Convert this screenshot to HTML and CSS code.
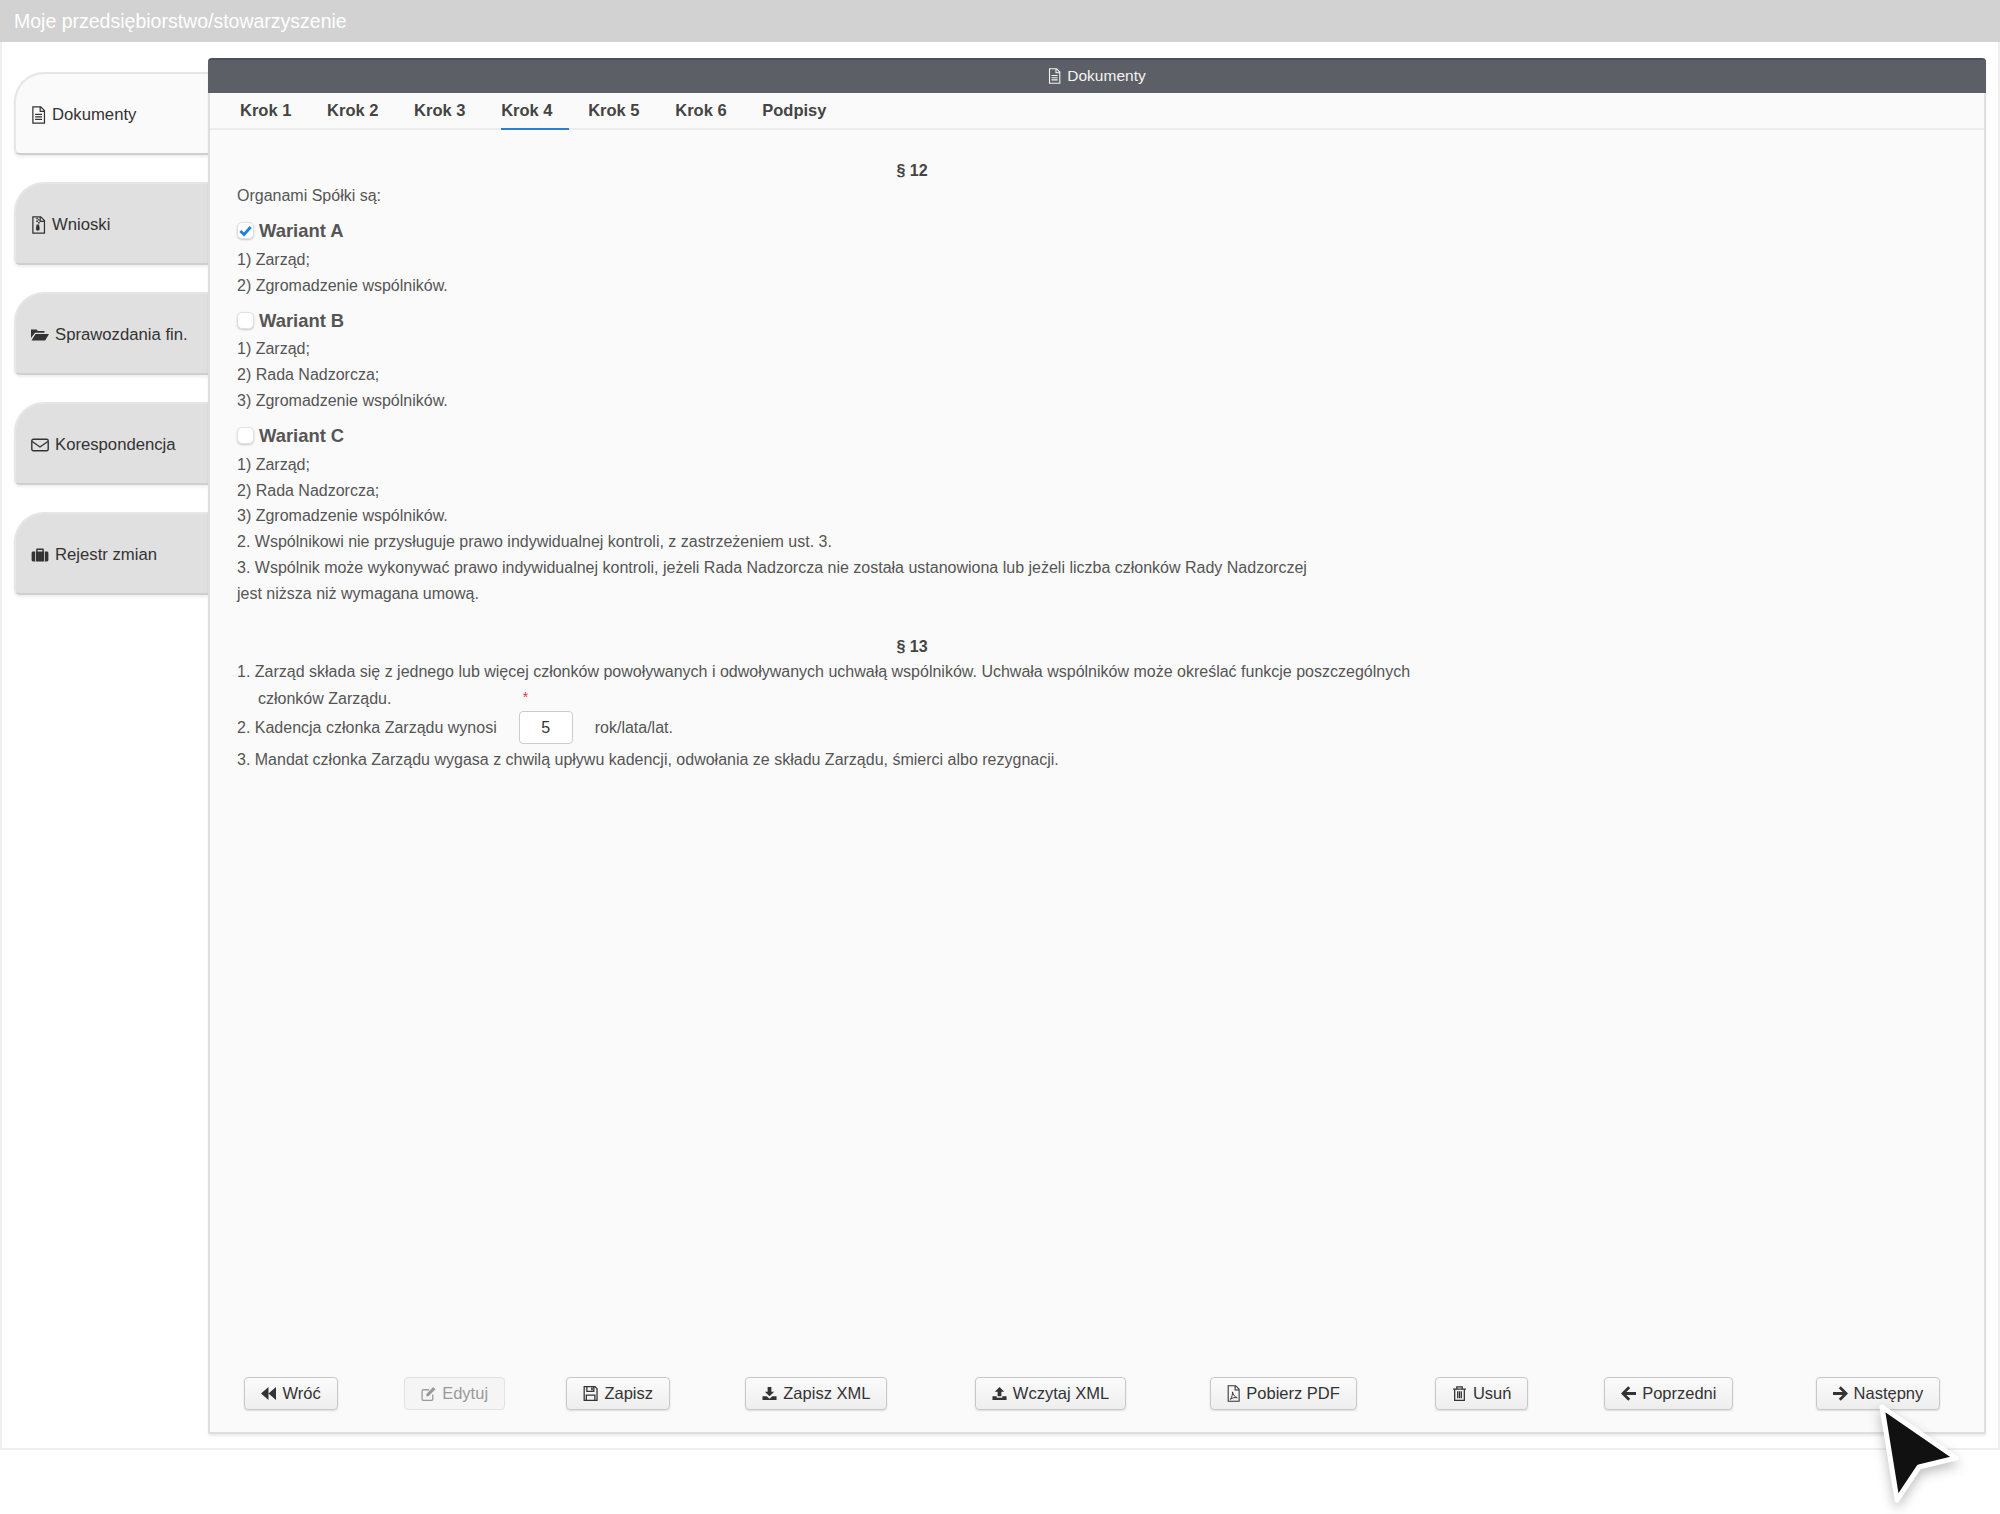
FILE: index.html
```html
<!DOCTYPE html>
<html lang="pl">
<head>
<meta charset="utf-8">
<title>Dokumenty</title>
<link rel="stylesheet" href="styles.css">
</head>
<body>
<svg class="defs" width="0" height="0" aria-hidden="true">
  <symbol id="i-file" viewBox="2 0 12 16"><path d="M3 .7h7l3.300 3.300V15.300H3z M9.500 .7v4H13.300 M5 7.500h6.200 M5 9.700h6.200 M5 11.900h6.200" fill="none" stroke="currentColor" stroke-width="1.100"/></symbol>
  <symbol id="i-zip" viewBox="2 0 12 16"><path d="M3 .7h7l3.300 3.300V15.300H3z M9.500 .7v4H13.300" fill="none" stroke="currentColor" stroke-width="1.100"/><path d="M6 1.500h1.500v1.300H6z M7.500 2.800h1.500v1.300H7.500z M6 4.100h1.500v1.300H6z M7.500 5.400h1.500v1.300H7.500z M6.300 7.500h2.200l.6 3.800a1.700 1.700 0 1 1-3.400 0z" fill="currentColor"/></symbol>
  <symbol id="i-folder" viewBox="0 1.500 18 13"><path d="M0 2.500h5.500l1.500 1.500h6.500v1.800H4L0 11z M4.500 7H18l-3.800 6.500H0.500z" fill="currentColor"/></symbol>
  <symbol id="i-mail" viewBox="0 1.500 18 13"><rect x=".8" y="2.300" width="16.400" height="11.400" rx="1.500" fill="none" stroke="currentColor" stroke-width="1.400"/><path d="M1.200 4.500 9 10l7.800-5.500" fill="none" stroke="currentColor" stroke-width="1.400"/></symbol>
  <symbol id="i-case" viewBox="0 1 18 14.500"><path d="M1.800 4.500H4V15H1.800A1.500 1.500 0 0 1 .3 13.500V6a1.500 1.500 0 0 1 1.500-1.500z M14 4.500h2.200A1.500 1.500 0 0 1 17.700 6v7.500a1.500 1.500 0 0 1-1.500 1.500H14z M5 4.500V2.700a1.200 1.200 0 0 1 1.200-1.200h5.600A1.200 1.200 0 0 1 13 2.700v1.800h.2V15H4.800V4.500z M6.500 4.500h5V3h-5z" fill="currentColor" fill-rule="evenodd"/></symbol>
  <symbol id="i-back" viewBox="1 1.500 14 13"><path d="M8 2v12L1 8z M15 2v12L8 8z" fill="currentColor"/></symbol>
  <symbol id="i-edit" viewBox="1 1 14 14"><path d="M12 9v4a1.500 1.500 0 0 1-1.500 1.500h-7A1.500 1.500 0 0 1 2 13V6a1.500 1.500 0 0 1 1.500-1.500h5" fill="none" stroke="currentColor" stroke-width="1.200"/><path d="M6 8.500 12.500 2 14.500 4 8 10.500H6z" fill="currentColor"/></symbol>
  <symbol id="i-save" viewBox="1.400 1 13 14"><path d="M2 1.500h10l2 2v11H2z M4.500 1.500v4.500h6.500V1.500 M4 14.500V9.500h8v5" fill="none" stroke="currentColor" stroke-width="1.200"/><path d="M8.500 2.500h1.500v2.500H8.500z" fill="currentColor"/></symbol>
  <symbol id="i-down" viewBox="0 1 16 14"><path d="M6 1h4v5h3l-5 5-5-5h3z M0.500 11H5l3 2.500 3-2.500h4.500v4H.5z" fill="currentColor"/></symbol>
  <symbol id="i-up" viewBox="0 1 16 14"><path d="M6 11V6H3l5-5 5 5h-3v5z M0.500 11H5v1.500h6V11h4.500v4H.5z" fill="currentColor"/></symbol>
  <symbol id="i-pdf" viewBox="2 0 12 16"><path d="M3 .7h7l3.300 3.300V15.300H3z M9.500 .7v4H13.300" fill="none" stroke="currentColor" stroke-width="1"/><path d="M7 6.500c1 3 2 4.500 4.500 5.500-2.500-.5-4.500 0-6.500 1.500 1.500-2 2.300-4.500 2-7z" fill="none" stroke="currentColor" stroke-width=".9"/></symbol>
  <symbol id="i-trash" viewBox="1.500 1 13 14"><path d="M2 4h12 M3.500 4v10.500h9V4 M5.500 4V1.800h5V4 M6.300 6v6.500 M8 6v6.500 M9.700 6v6.500" fill="none" stroke="currentColor" stroke-width="1.200"/></symbol>
  <symbol id="i-left" viewBox="1.500 1.500 13.500 13"><path d="M8 1.500l1.800 1.800L6.300 6.700H15v2.600H6.300l3.500 3.400L8 14.500 1.500 8z" fill="currentColor"/></symbol>
  <symbol id="i-right" viewBox="1 1.500 13.500 13"><path d="M8 1.500 6.200 3.300l3.500 3.400H1v2.600h8.700l-3.500 3.400L8 14.500 14.500 8z" fill="currentColor"/></symbol>
</svg>

<header class="topbar">Moje przedsiębiorstwo/stowarzyszenie</header>

<div class="frame">
  <nav class="side">
    <a class="side-tab is-active"><svg class="ico ico-doc"><use href="#i-file"/></svg>Dokumenty</a>
    <a class="side-tab"><svg class="ico ico-doc"><use href="#i-zip"/></svg>Wnioski</a>
    <a class="side-tab"><svg class="ico ico-wide"><use href="#i-folder"/></svg>Sprawozdania fin.</a>
    <a class="side-tab"><svg class="ico ico-wide"><use href="#i-mail"/></svg>Korespondencja</a>
    <a class="side-tab"><svg class="ico ico-wide"><use href="#i-case"/></svg>Rejestr zmian</a>
  </nav>

  <main class="panel">
    <div class="panel-head"><svg class="ico ico-head"><use href="#i-file"/></svg>Dokumenty</div>
    <div class="steps">
      <a class="step">Krok 1</a>
      <a class="step">Krok 2</a>
      <a class="step">Krok 3</a>
      <a class="step is-current">Krok 4</a>
      <a class="step">Krok 5</a>
      <a class="step">Krok 6</a>
      <a class="step">Podpisy</a>
    </div>

    <article class="doc">
      <h3 class="para-title">§ 12</h3>
      <p class="line">Organami Spółki są:</p>
      <div class="variant"><span class="check is-on"><svg viewBox="0 0 16 16" class="tick"><path d="M2.500 8.500 6.500 12.300 13.500 4.300" fill="none" stroke="currentColor" stroke-width="3"/></svg></span>Wariant A</div>
      <p class="line">1) Zarząd;</p>
      <p class="line">2) Zgromadzenie wspólników.</p>
      <div class="variant"><span class="check"></span>Wariant B</div>
      <p class="line">1) Zarząd;</p>
      <p class="line">2) Rada Nadzorcza;</p>
      <p class="line">3) Zgromadzenie wspólników.</p>
      <div class="variant"><span class="check"></span>Wariant C</div>
      <p class="line">1) Zarząd;</p>
      <p class="line">2) Rada Nadzorcza;</p>
      <p class="line">3) Zgromadzenie wspólników.</p>
      <p class="line">2. Wspólnikowi nie przysługuje prawo indywidualnej kontroli, z zastrzeżeniem ust. 3.</p>
      <p class="line">3. Wspólnik może wykonywać prawo indywidualnej kontroli, jeżeli Rada Nadzorcza nie została ustanowiona lub jeżeli liczba członków Rady Nadzorczej<br>jest niższa niż wymagana umową.</p>

      <h3 class="para-title para-next">§ 13</h3>
      <p class="line">1. Zarząd składa się z jednego lub więcej członków powoływanych i odwoływanych uchwałą wspólników. Uchwała wspólników może określać funkcje poszczególnych</p>
      <p class="line line-wrap">członków Zarządu.</p>
      <div class="field-row">
        <span>2. Kadencja członka Zarządu wynosi</span>
        <span class="field"><span class="req">*</span><input class="num" type="text" value="5" aria-label="Kadencja"></span>
        <span>rok/lata/lat.</span>
      </div>
      <p class="line line-after">3. Mandat członka Zarządu wygasa z chwilą upływu kadencji, odwołania ze składu Zarządu, śmierci albo rezygnacji.</p>
    </article>

    <footer class="actions">
      <button class="btn"><svg class="ico ico-btn"><use href="#i-back"/></svg>Wróć</button>
      <button class="btn is-disabled"><svg class="ico ico-btn"><use href="#i-edit"/></svg>Edytuj</button>
      <button class="btn"><svg class="ico ico-btn"><use href="#i-save"/></svg>Zapisz</button>
      <button class="btn"><svg class="ico ico-btn"><use href="#i-down"/></svg>Zapisz XML</button>
      <button class="btn"><svg class="ico ico-btn"><use href="#i-up"/></svg>Wczytaj XML</button>
      <button class="btn"><svg class="ico ico-tall"><use href="#i-pdf"/></svg>Pobierz PDF</button>
      <button class="btn"><svg class="ico ico-btn"><use href="#i-trash"/></svg>Usuń</button>
      <button class="btn"><svg class="ico ico-btn"><use href="#i-left"/></svg>Poprzedni</button>
      <button class="btn"><svg class="ico ico-btn"><use href="#i-right"/></svg>Następny</button>
    </footer>
  </main>
</div>

<svg class="cursor" viewBox="0 0 90 110" aria-hidden="true">
  <path d="M6 6 L80 57 L43 66 L21 99 Z" fill="#111" stroke="#fff" stroke-width="5" stroke-linejoin="round"/>
</svg>
</body>
</html>
```

FILE: styles.css
```css
* { box-sizing: border-box; }

html, body {
  margin: 0;
  background: #fff;
}

body {
  position: relative;
  min-height: 1514px;
  font-family: "Liberation Sans", Arial, sans-serif;
  font-size: 16px;
  color: #555;
}

.defs { position: absolute; }

.topbar {
  height: 42px;
  padding-left: 14px;
  background: #d2d2d2;
  color: #fff;
  font-size: 19.500px;
  line-height: 42px;
}

.frame {
  display: flex;
  height: 1408px;
  padding: 16px 12px 0 12px;
  border: 2px solid #efefef;
  border-top: 0;
}

/* side tabs */
.side {
  display: flex;
  flex-direction: column;
  gap: 27px;
  flex: 0 0 194px;
  padding-top: 14px;
}

.side-tab {
  display: flex;
  align-items: center;
  height: 83px;
  padding: 2px 0 0 15px;
  background: #e0e0e0;
  border: 2px solid #e6e6e6;
  border-bottom-color: #cfcfcf;
  border-right: 0;
  border-radius: 30px 0 0 6px;
  box-shadow: 0 2px 3px rgba(0, 0, 0, .07);
  color: #333;
  font-size: 16.700px;
}

.side-tab.is-active { background: #fafafa; }

.ico { flex: none; }
.ico-doc { width: 15px; height: 18px; margin-right: 6px; }
.ico-wide { width: 18px; height: 14px; margin-right: 6px; }
.ico-head { width: 13px; height: 16px; margin-right: 6px; vertical-align: -3px; }
.ico-btn { width: 15px; height: 15px; margin-right: 6px; vertical-align: -2px; }
.ico-tall { width: 13px; height: 17px; margin-right: 6px; vertical-align: -3px; }

/* main panel */
.panel {
  flex: 1;
  display: flex;
  flex-direction: column;
  height: 1376px;
  background: #fafafa;
  border: 2px solid #dedede;
  border-top: 0;
  border-radius: 4px 4px 2px 2px;
  box-shadow: 0 2px 2px rgba(0, 0, 0, .08);
}

.panel-head {
  height: 35px;
  margin: 0 -2px;
  background: #5c5f66;
  border-top: 2px solid #4d5056;
  border-radius: 4px 4px 0 0;
  color: #f4f4f4;
  font-size: 15.500px;
  line-height: 31px;
  text-align: center;
}

.steps {
  display: flex;
  gap: 19.700px;
  height: 37px;
  padding-left: 30px;
  border-bottom: 2px solid #ececec;
}

.step {
  height: 37px;
  padding-right: 16px;
  color: #444;
  font-size: 16.500px;
  font-weight: 700;
  line-height: 35px;
}

.step.is-current { border-bottom: 2px solid #2a7fd5; }

/* document body */
.doc {
  flex: 1;
  padding: 28px 0 0 27px;
  width: 1377px;
}

.para-title {
  margin: 0;
  font-size: 16px;
  line-height: 25px;
  text-align: center;
  color: #444;
}

.para-next { margin-top: 27px; }

.line {
  margin: 0;
  line-height: 25.800px;
}

.line-wrap { margin-top: 2px; padding-left: 21px; }
.line-after { margin-top: 3px; }

.variant {
  display: flex;
  align-items: center;
  height: 29px;
  margin-top: 9px;
  padding-bottom: 2px;
  font-size: 18.400px;
  font-weight: 700;
}

.check {
  display: flex;
  align-items: center;
  justify-content: center;
  width: 17px;
  height: 17px;
  margin: -1px 5px 0 0;
  background: #fff;
  border: 1px solid #e2e2e2;
  border-radius: 5px;
  box-shadow: 0 1px 2px rgba(0, 0, 0, .2);
}

.tick { width: 15px; height: 15px; color: #1c7fe6; }

.field-row {
  display: flex;
  align-items: center;
  height: 33px;
  margin-top: -1px;
}

.field {
  position: relative;
  margin: 0 22px 0 22px;
}

.req {
  position: absolute;
  left: 4px;
  top: -22px;
  color: #e33;
  font-size: 14px;
}

.num {
  display: block;
  width: 54px;
  height: 33px;
  padding: 0;
  background: #fff;
  border: 1px solid #ccc;
  border-radius: 4px;
  color: #333;
  font: 16px "Liberation Sans", Arial, sans-serif;
  text-align: center;
}

/* footer buttons */
.actions {
  display: grid;
  grid-template-columns: 152fr 175fr 152fr 244fr 224fr 242fr 154fr 220fr 198fr;
  justify-items: center;
  padding: 0 7px 22px 5px;
}

.btn {
  height: 33px;
  padding: 0 16px;
  background: linear-gradient(#fbfbfb, #eeeeee);
  border: 1px solid #c8c8c8;
  border-radius: 4px;
  box-shadow: 0 1px 2px rgba(0, 0, 0, .12);
  color: #333;
  font: 16.500px "Liberation Sans", Arial, sans-serif;
  white-space: nowrap;
}

.btn.is-disabled {
  border-color: #e2e2e2;
  background: #f5f5f5;
  color: #999;
  box-shadow: none;
}

/* pointer drawn over the page */
.cursor {
  position: absolute;
  left: 1876px;
  top: 1401px;
  width: 90px;
  height: 110px;
  filter: drop-shadow(0 5px 6px rgba(0, 0, 0, .25));
}
```
